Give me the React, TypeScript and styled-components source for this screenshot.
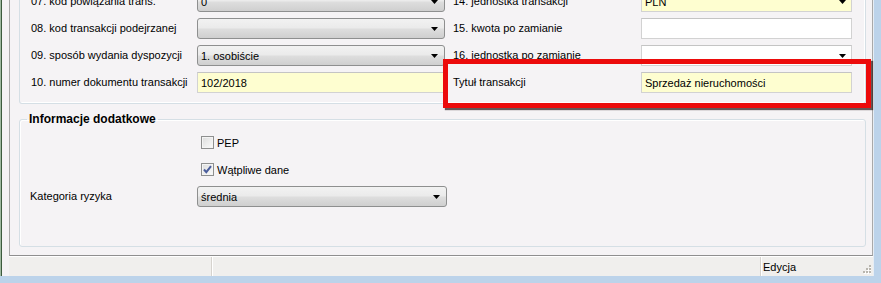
import React from "react";
import styled, { createGlobalStyle, css } from "styled-components";

const Global = createGlobalStyle`
  html, body { margin: 0; padding: 0; }
  body {
    width: 881px; height: 283px; overflow: hidden;
    background: #bcd3ea;
    font-family: "Liberation Sans", Arial, sans-serif;
    font-size: 11px; color: #000;
  }
`;

const Screen = styled.div`
  position: relative;
  width: 881px; height: 283px;
  display: flex; align-items: flex-start;
  background: #bcd3ea;
  overflow: hidden;
`;

const LeftFrame = styled.div`
  width: 2px; height: 276px;
  border-left: 1px solid #9fb9a0;
  background: #3c5a3e;
  box-sizing: border-box;
`;

const Client = styled.div`
  width: 871px; height: 276px;
  display: flex; flex-direction: column;
  background: #f4f2f4;
`;

const Panel = styled.div`
  flex: 1; min-height: 0;
  margin-left: 7px;
  display: flex; flex-direction: column;
  border-left: 1px solid #a9a9a9;
  border-right: 1px solid #a9a9a9;
  border-bottom: 1px solid #8f8f8f;
  background: #f5f3f5;
`;

const TopGroup = styled.div`
  margin: -9px 6px 0 9px;
  padding: 0 12px 10px 11px;
  border: 1px solid #d5dfe5;
  border-top: none;
  border-radius: 0 0 3px 3px;
  box-shadow: inset -1px -1px 0 #fff;
`;

const FormGrid = styled.div`
  display: grid;
  grid-template-columns: 166px 248px 8px 188px 211px;
  grid-auto-rows: 21px;
  row-gap: 6px;
  align-items: center;
`;

const Label = styled.div<{ $col?: number }>`
  grid-column: ${(p) => p.$col ?? 1};
  white-space: nowrap;
  line-height: 13px;
`;

const fieldBase = css`
  height: 21px; box-sizing: border-box;
  display: flex; align-items: center; justify-content: space-between;
  padding: 0 6px 0 3px;
  white-space: nowrap;
`;

const Combo = styled.div<{ $col?: number }>`
  ${fieldBase}
  grid-column: ${(p) => p.$col ?? 2};
  border: 1px solid #8e8f8f;
  border-radius: 3px;
  background: linear-gradient(#f2f2f2 0%, #ebebeb 45%, #dddddd 55%, #cfcfcf 100%);
`;

const TextBox = styled.div<{ $col?: number; $yellow?: boolean; $arrow?: boolean }>`
  ${fieldBase}
  grid-column: ${(p) => p.$col ?? 2};
  border: 1px solid #d2d2d2;
  border-top-color: #c4c4c4;
  background: ${(p) => (p.$yellow ? "#fefed0" : "#ffffff")};
  padding-right: ${(p) => (p.$arrow ? "5px" : "6px")};
`;

const ArrowSvg = styled.svg`
  flex: none;
`;

const Arrow = () => (
  <ArrowSvg width="7" height="4" viewBox="0 0 7 4">
    <path d="M0 0H7L3.5 4Z" fill="#000" />
  </ArrowSvg>
);

const InfoGroup = styled.fieldset`
  flex: 1; min-height: 0;
  margin: 8px 6px 8px 9px;
  padding: 0 0 0 7px;
  border: 1px solid #d5dfe5;
  border-radius: 3px;
  box-shadow: inset 1px 1px 0 #fff;
  min-width: 0;
`;

const Legend = styled.legend`
  padding: 0 2px;
  font-weight: bold;
  font-size: 12px;
  line-height: 14px;
`;

const InfoGrid = styled.div`
  display: grid;
  grid-template-columns: 167px 250px;
  grid-auto-rows: 21px;
  row-gap: 6px;
  align-items: center;
  margin-top: 6px;
  padding-left: 3px;
`;

const CheckRow = styled.label`
  grid-column: 2;
  display: flex; align-items: center; gap: 3px;
  padding-left: 4px;
`;

const CheckBoxBox = styled.span`
  width: 13px; height: 13px; box-sizing: border-box;
  border: 1px solid #8e8f8f;
  background: linear-gradient(135deg, #dcdcdc, #fbfbfb);
  box-shadow: inset 0 0 0 1px #f4f4f4;
  display: inline-flex; align-items: center; justify-content: center;
`;

const CheckBox = ({ checked }: { checked?: boolean }) => (
  <CheckBoxBox>
    {checked && (
      <svg width="11" height="11" viewBox="0 0 11 11">
        <path d="M2 5.5L4.3 8.2L9 2.2" stroke="#4a5d9c" strokeWidth="2" fill="none" />
      </svg>
    )}
  </CheckBoxBox>
);

const StatusBar = styled.div`
  height: 20px; box-sizing: border-box;
  margin-left: 7px;
  display: flex;
  background: #f0efed;
  border-top: 1px solid #ffffff;
`;

const StatusCell = styled.div<{ $w?: number; $grow?: boolean }>`
  ${(p) => (p.$grow ? "flex: 1;" : `width: ${p.$w}px;`)}
  display: flex; align-items: center;
  padding-left: 3px;
  box-sizing: border-box;
  border-right: 1px solid #d6d3ce;
  box-shadow: 1px 0 0 #fff;
`;

const StatusLast = styled.div`
  width: 112px;
  display: flex; align-items: center; justify-content: space-between;
  padding-left: 2px;
  box-sizing: border-box;
`;

const Grip = styled.svg`
  align-self: flex-end;
  margin: 0 2px 1px 0;
`;

const RightFrame = styled.div`
  width: 8px; height: 276px;
  border-left: 1px solid #e6edf4;
  box-sizing: border-box;
`;

const Highlight = styled.div`
  position: absolute;
  left: 443px; top: 59px;
  width: 428px; height: 49px;
  box-sizing: border-box;
  border: 5px solid #ec0b0b;
  box-shadow: 2px 2px 1px rgba(40, 20, 20, 0.7);
  pointer-events: none;
`;

export default function App() {
  return (
    <>
      <Global />
      <Screen>
        <LeftFrame />
        <Client>
          <Panel>
            <TopGroup>
              <FormGrid>
                <Label>07. kod powiązania trans.</Label>
                <Combo>0<Arrow /></Combo>
                <Label $col={4}>14. jednostka transakcji</Label>
                <TextBox $col={5} $yellow $arrow>PLN<Arrow /></TextBox>

                <Label>08. kod transakcji podejrzanej</Label>
                <Combo><span /><Arrow /></Combo>
                <Label $col={4}>15. kwota po zamianie</Label>
                <TextBox $col={5} />

                <Label>09. sposób wydania dyspozycji</Label>
                <Combo>1. osobiście<Arrow /></Combo>
                <Label $col={4}>16. jednostka po zamianie</Label>
                <TextBox $col={5} $arrow><span /><Arrow /></TextBox>

                <Label>10. numer dokumentu transakcji</Label>
                <TextBox $yellow>102/2018</TextBox>
                <Label $col={4}>Tytuł transakcji</Label>
                <TextBox $col={5} $yellow>Sprzedaż nieruchomości</TextBox>
              </FormGrid>
            </TopGroup>
            <InfoGroup>
              <Legend>Informacje dodatkowe</Legend>
              <InfoGrid>
                <CheckRow><CheckBox />PEP</CheckRow>
                <CheckRow><CheckBox checked />Wątpliwe dane</CheckRow>
                <Label>Kategoria ryzyka</Label>
                <Combo>średnia<Arrow /></Combo>
              </InfoGrid>
            </InfoGroup>
          </Panel>
          <StatusBar>
            <StatusCell $w={203} />
            <StatusCell $grow />
            <StatusLast>
              Edycja
              <Grip width="10" height="10" viewBox="0 0 10 10">
                {[
                  [8, 0], [8, 3], [5, 3], [8, 6], [5, 6], [2, 6],
                ].map(([x, y], i) => (
                  <g key={i}>
                    <rect x={x + 1} y={y + 1} width="2" height="2" fill="#fff" />
                    <rect x={x} y={y} width="2" height="2" fill="#b9b6ae" />
                  </g>
                ))}
              </Grip>
            </StatusLast>
          </StatusBar>
        </Client>
        <RightFrame />
        <Highlight />
      </Screen>
    </>
  );
}
